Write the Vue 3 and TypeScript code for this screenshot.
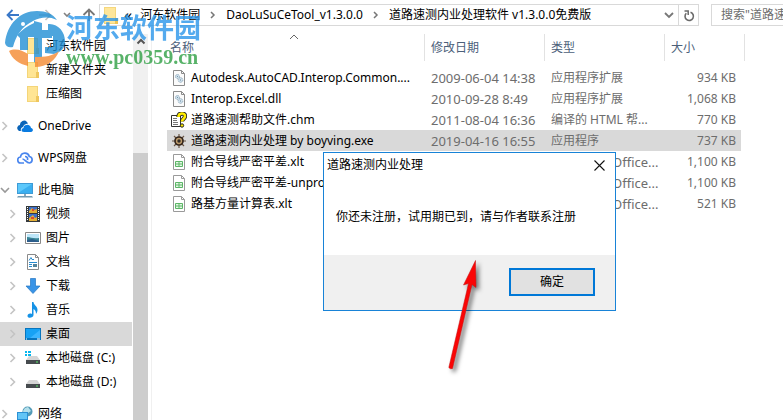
<script setup lang="ts">
import { ref } from 'vue'

interface NavItem { label: string; icon: string; level: number; arrow: '' | 'closed' | 'open'; gap?: boolean }
interface FileRow { name: string; date: string; type: string; size: string; icon: string }

const navItems: NavItem[] = [
  { label: '河东软件园', icon: 'folder', level: 2, arrow: '' },
  { label: '新建文件夹', icon: 'folder', level: 2, arrow: '' },
  { label: '压缩图', icon: 'folder', level: 2, arrow: '' },
  { label: 'OneDrive', icon: 'onedrive', level: 1, arrow: 'closed', gap: true },
  { label: 'WPS网盘', icon: 'wps', level: 1, arrow: 'closed', gap: true },
  { label: '此电脑', icon: 'pc', level: 1, arrow: 'open', gap: true },
  { label: '视频', icon: 'video', level: 2, arrow: 'closed' },
  { label: '图片', icon: 'picture', level: 2, arrow: 'closed' },
  { label: '文档', icon: 'document', level: 2, arrow: 'closed' },
  { label: '下载', icon: 'download', level: 2, arrow: 'closed' },
  { label: '音乐', icon: 'music', level: 2, arrow: 'closed' },
  { label: '桌面', icon: 'desktop', level: 2, arrow: 'closed' },
  { label: '本地磁盘 (C:)', icon: 'diskc', level: 2, arrow: 'closed' },
  { label: '本地磁盘 (D:)', icon: 'disk', level: 2, arrow: 'closed' },
  { label: '网络', icon: 'network', level: 1, arrow: 'closed', gap: true },
]

const files: FileRow[] = [
  { name: 'Autodesk.AutoCAD.Interop.Common....', date: '2009-06-04 14:38', type: '应用程序扩展', size: '934 KB', icon: 'dll' },
  { name: 'Interop.Excel.dll', date: '2010-09-28 8:49', type: '应用程序扩展', size: '1,068 KB', icon: 'dll' },
  { name: '道路速测帮助文件.chm', date: '2011-08-04 16:36', type: '编译的 HTML 帮...', size: '770 KB', icon: 'chm' },
  { name: '道路速测内业处理 by boyving.exe', date: '2019-04-16 16:55', type: '应用程序', size: '737 KB', icon: 'exe' },
  { name: '附合导线严密平差.xlt', date: '', type: 'Microsoft Office...', size: '1,100 KB', icon: 'xlt' },
  { name: '附合导线严密平差-unpro', date: '', type: 'Microsoft Office...', size: '1,100 KB', icon: 'xlt' },
  { name: '路基方量计算表.xlt', date: '', type: 'Microsoft Office...', size: '521 KB', icon: 'xlt' },
]

const currentNav = ref('桌面')
const selectedFile = ref(3)
const dialogOpen = ref(true)

// Latin-only type names are set one pixel larger than the Chinese ones
const isLatin = (text: string): boolean => /^[\u0000-\u00ff]+$/.test(text)
</script>

<template>
  <div class="explorer">
    <header class="toolbar">
      <div class="history">
        <button type="button" aria-label="后退"><svg width="14" height="14" viewBox="0 0 14 14"><path d="M13 7H1.500M6.500 2L1.500 7l5 5" fill="none" stroke="#3a78c8" stroke-width="1.800" /></svg></button>
        <button type="button" aria-label="前进"><svg width="14" height="14" viewBox="0 0 14 14"><path d="M1 7h11.500M7.500 2l5 5-5 5" fill="none" stroke="#c0c0c0" stroke-width="1.600" /></svg></button>
        <button type="button" aria-label="最近浏览" class="recent"><svg width="8" height="8" viewBox="0 0 8 8"><path d="M1 2l3 3 3-3" fill="none" stroke="#808080" stroke-width="1.600" /></svg></button>
        <button type="button" aria-label="上移"><svg width="14" height="14" viewBox="0 0 14 14"><path d="M7 13V2M1.500 7L7 1.500 12.500 7" fill="none" stroke="#777" stroke-width="1.800" /></svg></button>
      </div>
      <nav class="address" aria-label="地址">
        <svg width="14" height="17" viewBox="0 0 14 17"><path d="M0 0h12v11h2v6H0z" fill="#f5d77c" /><path d="M1 1h10v15H1z" fill="#ffe69a" /><path d="M11 11h3v6h-3z" fill="#eec455" /></svg>
        <span class="guillemet">«</span>
        <a href="#">河东软件园</a>
        <svg class="sep" width="6" height="8" viewBox="0 0 6 8"><path d="M1 1l3 3-3 3" fill="none" stroke="#777" stroke-width="1.500" /></svg>
        <a href="#">DaoLuSuCeTool_v1.3.0.0</a>
        <svg class="sep" width="6" height="8" viewBox="0 0 6 8"><path d="M1 1l3 3-3 3" fill="none" stroke="#777" stroke-width="1.500" /></svg>
        <a href="#">道路速测内业处理软件 v1.3.0.0免费版</a>
        <button type="button" class="drop" aria-label="以前的位置"><svg width="10" height="8" viewBox="0 0 10 8"><path d="M1 2l4 4 4-4" fill="none" stroke="#777" stroke-width="1.800" /></svg></button>
        <button type="button" class="refresh" aria-label="刷新"><svg width="12" height="13" viewBox="0 0 12 13"><path d="M3.300 4.300A4.200 4.200 0 1 0 7.500 3.300" fill="none" stroke="#6a6a6a" stroke-width="1.600" /><path d="M1.500 2h3.700v4" fill="none" stroke="#6a6a6a" stroke-width="1.500" /></svg></button>
      </nav>
      <input class="search" type="text" aria-label="搜索" placeholder="搜索&quot;道路速测内业处理软件" />
    </header>

    <div class="body">
      <aside class="side">
        <ul class="tree">
          <li v-for="item in navItems" :key="item.label" :class="{ gap: item.gap }">
            <button type="button" class="node" :class="['level' + item.level, { current: currentNav === item.label }]" @click="currentNav = item.label">
              <span class="twisty">
                <svg v-if="item.arrow === 'closed'" width="8" height="10" viewBox="0 0 8 10"><path d="M2.500 1l4 4-4 4" fill="none" stroke="#c4c4c4" stroke-width="1.600" /></svg>
                <svg v-else-if="item.arrow === 'open'" width="10" height="8" viewBox="0 0 10 8"><path d="M1 2l4 4 4-4" fill="none" stroke="#999" stroke-width="1.600" /></svg>
              </span>
              <svg class="icon" width="16" height="16" viewBox="0 0 16 16">
                <g v-if="item.icon === 'folder'"><path d="M2 0h11v11h1v5H2z" fill="#f4d579" /><path d="M3 1h9v14H3z" fill="#ffe594" /><path d="M11 10h3v6h-3z" fill="#efc75e" /></g>
                <g v-else-if="item.icon === 'onedrive'"><path d="M1 12a3 3 0 0 1 2-5 4 4 0 0 1 7-3l1 1.500-2 .5a4 4 0 0 0-3 3 3 3 0 0 0-2 4H2z" fill="#0a64b8" /><path d="M5 13.500A2.500 2.500 0 0 1 6.500 10a3.200 3.200 0 0 1 3-3 3.500 3.500 0 0 1 4.500 3c2.500.2 2.500 3.800 0 4H7z" fill="#0a7be0" /></g>
                <g v-else-if="item.icon === 'wps'" fill="none" stroke="#4a86ee" stroke-width="1.700"><path d="M7 13H4a3 3 0 0 1-.5-6 4.500 4.500 0 0 1 8.800-.5A3.300 3.300 0 0 1 12.500 13c-3 0-5-4-7-4" /><path d="M8 6.500c2 0 3 1.500 2.500 3.500" /></g>
                <g v-else-if="item.icon === 'pc'"><path d="M0 1h16v11H0z" fill="#3e9bd6" /><path d="M1 2h14v9H1z" fill="#5cc8fb" /><path d="M1 11l14-9v9z" fill="#3baff0" /><path d="M7 12h2v2H7z" fill="#8ba7b9" /><path d="M1 14h14l1 1.500H0z" fill="#759bb2" /></g>
                <g v-else-if="item.icon === 'video'"><path d="M1 0h14v16H1z" fill="#363a3d" /><path d="M4 1h8v6H4zM4 8h8v7H4z" fill="#3e6fc8" /><path d="M4 5l3-3 2 2 3-1v4H4zM4 12l4-3 2 3 2-1v4H4z" fill="#e3af36" /><path d="M7 3h2v2H7zM6 11h3v2H6z" fill="#dc4c2d" /><path d="M2.500 1v14M13.500 1v14" stroke="#fff" stroke-width="1" stroke-dasharray="1 1" /></g>
                <g v-else-if="item.icon === 'picture'"><path d="M.5 2.500h15v11H.5z" fill="#fff" stroke="#888" /><path d="M2 4h12v8H2z" fill="#bde6f9" /><path d="M2 7c4 0 6 2 12 1v4H2z" fill="#398596" /><path d="M2 10l5-1 7 2v1H2z" fill="#2c5d8b" /></g>
                <g v-else-if="item.icon === 'document'"><path d="M2.500.5h8l3 3v12h-11z" fill="#fff" stroke="#8a8a8a" /><path d="M10.500.5v3h3" fill="none" stroke="#8a8a8a" /><path d="M4 6.500l2-3 1 2h2M4 8.500h8M4 10.500h3M4 12.500h3" fill="none" stroke="#278bd0" /><path d="M8 10h4v3H8z" fill="#55849b" /></g>
                <path v-else-if="item.icon === 'download'" d="M5.500.5h5v7.500H15l-7 7.500L1 8h4.500z" fill="#3994e7" stroke="#2477c3" stroke-width=".7" />
                <path v-else-if="item.icon === 'music'" d="M7 0h1.500c0 3 4 4 4 8 0 2-1 3-1.500 4 0-3-1-4-2.500-5v6c0 3-6 4-6 1 0-2 2-3 4.500-2z" fill="#1592e6" />
                <g v-else-if="item.icon === 'desktop'"><path d="M0 2h16v12H0z" fill="#0875bd" /><path d="M1 3h14v9H1z" fill="#17a2f4" /><path d="M5 12L15 4v8z" fill="#3bb5ff" /><path d="M1 13h1M12 13h3" stroke="#fff" /></g>
                <g v-else-if="item.icon === 'diskc' || item.icon === 'disk'"><path d="M4 6h8l3 4H1z" fill="#d5d5d5" /><path d="M1 10h14v4H1z" fill="#464b4e" /><path d="M11 12h2" stroke="#58e767" /><path v-if="item.icon === 'diskc'" d="M0 1h2v2H0zM3 1h3v2H3zM0 4h2v2H0zM3 4h3v2H3z" fill="#08b6ed" /></g>
                <g v-else><circle cx="10.500" cy="5.500" r="5" fill="#539bb7" /><path d="M8 2l3-1 3 4-3 2-2-1-2 2-1-3z" fill="#b4e0ec" /><path d="M0 6h11v8H0z" fill="#2b91d5" /><path d="M1 7h9v6H1z" fill="#62c5f6" /><path d="M2 15h8" stroke="#6a91aa" /></g>
              </svg>
              <span>{{ item.label }}</span>
            </button>
          </li>
        </ul>
        <div class="scrollbar">
          <svg width="15" height="14" viewBox="0 0 15 14"><path d="M4.500 9.500L8 6l3.500 3.500" fill="none" stroke="#555" stroke-width="2" /></svg>
          <div class="thumb"></div>
        </div>
      </aside>

      <main class="list">
        <table>
          <thead>
            <tr>
              <th class="name">名称<svg class="sort" width="10" height="6" viewBox="0 0 10 6"><path d="M1 5l4-4 4 4" fill="none" stroke="#666" /></svg></th>
              <th class="date">修改日期</th>
              <th class="type">类型</th>
              <th class="size">大小</th>
            </tr>
          </thead>
          <tbody>
            <tr v-for="(file, index) in files" :key="file.name" :class="{ selected: selectedFile === index }" @click="selectedFile = index">
              <td class="name">
                <div class="file">
                  <svg width="16" height="16" viewBox="0 0 16 16">
                    <g v-if="file.icon === 'dll'"><path d="M2.500.5h8l3 3v12h-11z" fill="#fbfbfb" stroke="#8b8b8b" /><path d="M10.500.5v3h3" fill="none" stroke="#8b8b8b" /><g fill="#d9eaf4" stroke="#8fa8ba"><circle cx="6.500" cy="6.500" r="2" stroke-dasharray="1.500 .6" /><circle cx="9.500" cy="10" r="2.300" stroke-dasharray="1.500 .6" /></g><circle cx="6.500" cy="6.500" r=".7" fill="#7896ab" /><circle cx="9.500" cy="10" r=".8" fill="#7896ab" /></g>
                    <g v-else-if="file.icon === 'chm'"><path d="M.5 3.500h9v11h-9z" fill="#fff" stroke="#333" /><path d="M2 6.500h4M2 8.500h4M2 10.500h5M2 12.500h5" stroke="#777" /><path d="M7.500 5c0-4.500 6.500-4.500 6.500-1 0 3-3 3-3 5.500" fill="none" stroke="#222" stroke-width="4.300" /><path d="M7.500 5c0-4.500 6.500-4.500 6.500-1 0 3-3 3-3 5.500" fill="none" stroke="#ffed00" stroke-width="2.600" /><circle cx="11" cy="13.500" r="1.700" fill="#ffed00" stroke="#222" /></g>
                    <g v-else-if="file.icon === 'exe'"><path d="M8 1v14M1 8h14M3 3l10 10M13 3L3 13" stroke="#6b5644" stroke-width="1.200" /><circle cx="8" cy="8" r="4" fill="#bd9b6b" stroke="#33251b" stroke-width="1.700" /><circle cx="8" cy="8" r="1.700" fill="#302b27" /></g>
                    <g v-else><path d="M2.500.5h8l3 3v12h-11z" fill="#fff" stroke="#9a9a9a" /><path d="M10.500.5v3h3" fill="none" stroke="#9a9a9a" /><path d="M4.500 7.500h7v5h-7zM4.500 10h7M8 7.500v5" fill="#e4f7e5" stroke="#5cb567" /></g>
                  </svg>
                  <span>{{ file.name }}</span>
                </div>
              </td>
              <td class="latin">{{ file.date }}</td>
              <td :class="{ latin: isLatin(file.type) }">{{ file.type }}</td>
              <td class="size">{{ file.size }}</td>
            </tr>
          </tbody>
        </table>
      </main>
    </div>

    <section v-if="dialogOpen" class="dialog" role="dialog" aria-labelledby="dialog-title">
      <div class="titlebar">
        <h1 id="dialog-title">道路速测内业处理</h1>
        <button type="button" aria-label="关闭" @click="dialogOpen = false"><svg width="11" height="11" viewBox="0 0 11 11"><path d="M.5.5l10 10M10.500.5l-10 10" stroke="#111" stroke-width="1.100" /></svg></button>
      </div>
      <p>你还未注册，试用期已到，请与作者联系注册</p>
      <footer><button type="button" @click="dialogOpen = false">确定</button></footer>
    </section>

    <svg class="pointer" width="50" height="124" viewBox="0 0 50 124" aria-hidden="true"><path d="M35.500 4.500L23.500 29l5-1.500L8.800 111.500q1.500 2 3.700 1L32 28.500l4 3z" fill="#fa0505" stroke="#c01010" stroke-width=".5" /></svg>

    <div class="watermark">
      <svg width="62" height="60" viewBox="0 0 62 60" aria-hidden="true">
        <path d="M1 34C3 15 16 2 33 2c9 0 16 3 20 9-8-4-17-3-24 1C17 18 12 27 9 38c-4 1-7 0-8-4z" fill="#218fd5" />
        <path d="M13 26c5-5 10-9 17-12v-2l8 2v7h10v8H38v28l-8-4V28h-6v13h-8V29z" fill="#218fd5" />
        <path d="M44 15c10-1 17 8 17 17 0 8-4 11-11 13l-9-1v-6h8V27h-5z" fill="#218fd5" />
        <path d="M5 42c6-3 13-1 19 3v12C15 55 8 50 5 42zM31 48c10 0 18-1 24-6-3 9-12 16-24 16z" fill="#f58a32" />
        <circle cx="19" cy="15" r="2" fill="#fff" />
      </svg>
      <div class="wordmark"><strong>河东软件园</strong><b>www.pc0359.cn</b></div>
    </div>
  </div>
</template>

<style>
body { margin: 0; overflow: hidden; }
</style>

<style scoped>
.explorer { position: relative; display: flex; flex-direction: column; height: 100vh; overflow: hidden; background: #fff; color: #000; font-family: "Noto Sans", "Noto Sans CJK SC", sans-serif; font-size: 12px; line-height: 20px; }
button { padding: 0; border: 0; background: none; font: inherit; color: inherit; }
svg { flex: none; }
.toolbar { display: flex; flex: none; height: 34px; box-sizing: border-box; padding: 4px 0 8px 6px; }
.history { display: flex; align-items: center; width: 93px; flex: none; gap: 18px; }
.history button { display: flex; }
.history .recent { margin: 0 -7px; }
.address { display: flex; flex: 1; min-width: 0; align-items: center; box-sizing: border-box; border: 1px solid #d9d9d9; padding-left: 4px; white-space: nowrap; }
.address a { color: #000; text-decoration: none; }
.address .sep { margin: 0 10px; }
.guillemet { margin: 0 8px 0 6px; font-size: 16px; }
.drop { display: flex; margin-left: auto; margin-right: 4px; }
.refresh { display: flex; align-items: center; justify-content: center; align-self: stretch; width: 20px; border-left: 1px solid #d9d9d9; }
.search { flex: none; width: 72px; box-sizing: border-box; margin-left: 12px; padding: 0 0 0 9px; border: 1px solid #d9d9d9; border-right: 0; border-radius: 0; background: #fff; font: inherit; outline: 0; }
.search::placeholder { color: #6d6d6d; opacity: 1; }
.body { display: flex; flex: 1; min-height: 0; }
.side { display: flex; flex: none; width: 151px; border-right: 1px solid #f0f0f0; overflow: hidden; }
.tree { flex: 1; margin: 0; padding: 0; list-style: none; }
.gap { margin-top: 8px; }
.node { display: flex; align-items: center; width: 100%; height: 24px; text-align: left; white-space: nowrap; }
.level2 { padding-left: 8px; }
.current { background: #d9d9d9; }
.twisty { display: flex; flex: none; width: 10px; }
.icon { margin: 0 5px 0 7px; }
.scrollbar { display: flex; flex-direction: column; width: 15px; margin: 0 3px 0 1px; background: #f0f0f0; }
.thumb { flex: 1; margin-top: 105px; background: #cdcdcd; }
.list { flex: 1; min-width: 0; padding: 0 42px 0 15px; }
table { width: 100%; table-layout: fixed; border-collapse: collapse; }
th { position: relative; height: 27px; padding: 0 0 0 7px; color: #4c607a; font-weight: 400; text-align: left; }
th.name { padding-left: 3px; }
th::after { content: ""; position: absolute; top: 0; right: -1px; width: 1px; height: 27px; background: #e2e2e2; }
th.size::after { right: -4px; }
th.date, th.type { width: 113px; }
th.size { width: 70px; }
.sort { position: absolute; left: 122px; top: 0; }
tbody::before { content: ""; display: table-row; height: 6px; }
td { height: 21px; padding: 0 0 0 7px; color: #6d6d6d; line-height: 20px; white-space: nowrap; overflow: hidden; }
td.name { padding-left: 4px; color: #000; }
td.latin { font-size: 13px; }
td.size { padding: 0 5px 0 0; text-align: right; }
.selected { background: #d9d9d9; }
.file { display: flex; align-items: center; gap: 4px; }
.dialog { position: absolute; left: 323px; top: 152px; display: flex; flex-direction: column; width: 293px; height: 159px; box-sizing: border-box; border: 1px solid #1883d7; background: #fff; }
.titlebar { display: flex; align-items: center; justify-content: space-between; height: 24px; padding: 0 10px 0 3px; }
.titlebar h1 { margin: 0; font-size: 12px; font-weight: 400; }
.titlebar button { display: flex; }
.dialog p { flex: 1; margin: 0; padding: 30px 12px 0; }
.dialog footer { display: flex; justify-content: flex-end; height: 55px; box-sizing: border-box; padding: 13px 20px; background: #f0f0f0; }
.dialog footer button { width: 86px; height: 28px; box-sizing: border-box; border: 2px solid #0078d7; background: #e1e1e1; }
.pointer { position: absolute; left: 440px; top: 256px; filter: drop-shadow(3px 3px 2px rgba(0, 0, 0, 0.5)); pointer-events: none; }
.watermark { position: absolute; left: 4px; top: 9px; display: flex; opacity: 0.8; pointer-events: none; }
.wordmark { display: flex; flex-direction: column; color: #2a96ea; }
.wordmark strong { font-size: 27px; line-height: 36px; font-weight: 700; font-family: "Noto Sans CJK SC", sans-serif; }
.wordmark b { margin-top: 2px; color: #2fa044; font: 700 20px/20px "Liberation Serif", serif; }
</style>
